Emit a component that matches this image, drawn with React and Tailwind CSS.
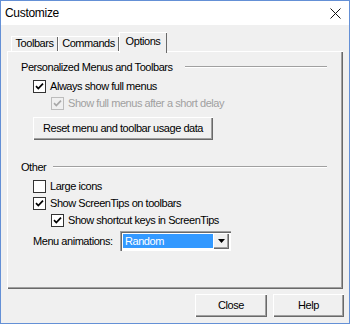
import React from "react";

const raised =
  "shadow-[inset_1px_1px_0_#ffffff,inset_-1px_-1px_0_#696969,inset_-2px_-2px_0_#a0a0a0]";

function Check({ checked, disabled }) {
  return (
    <span
      className={
        "w-[13px] h-[13px] shrink-0 flex items-center justify-center border " +
        (disabled ? "border-[#bcbcbc] bg-[#f0f0f0]" : "border-[#333333] bg-white")
      }
    >
      {checked && (
        <svg width="9" height="9" viewBox="0 0 9 9">
          <path
            d="M1 4.2 L3.3 6.6 L8 1.6"
            fill="none"
            stroke={disabled ? "#a8a8a8" : "#000"}
            strokeWidth="1.7"
          />
        </svg>
      )}
    </span>
  );
}

function CheckRow({ label, checked, disabled, indent }) {
  return (
    <div className={"h-[17px] flex items-center gap-[4px] " + (indent ? "ml-[30px]" : "ml-[12px]")}>
      <Check checked={checked} disabled={disabled} />
      <span className={disabled ? "text-[#a0a0a0]" : "text-black"}>{label}</span>
    </div>
  );
}

function GroupHeader({ title, lineW }) {
  return (
    <div className="h-[14px] flex items-center pr-[16px]">
      <span>{title}</span>
      <div className={"ml-auto h-[2px] border-t border-[#a0a0a0] border-b border-b-white " + lineW} />
    </div>
  );
}

function Tab({ label, w, selected }) {
  return (
    <div
      className={
        "flex items-center justify-center bg-[#f0f0f0] shadow-[inset_1px_1px_0_#ffffff,inset_-1px_0_0_#696969] " +
        w +
        (selected ? " h-[21px] mb-[-2px] relative z-10 pb-[3px]" : " h-[15px]")
      }
    >
      {label}
    </div>
  );
}

function Button({ children, w }) {
  return (
    <button className={"h-[23px] flex items-center justify-center bg-[#f0f0f0] " + raised + " " + w}>
      {children}
    </button>
  );
}

export default function App() {
  return (
    <div className="w-[350px] h-[324px] border border-[#6490d6] flex flex-col bg-[#f0f0f0] text-[11px] leading-[13px] tracking-[-0.45px] text-black font-['Liberation_Sans',Arial,sans-serif] overflow-hidden">
      {/* title bar */}
      <div className="h-[24px] bg-white flex items-center pl-[4px] pr-[8px] shrink-0">
        <span className="text-[12px] tracking-[-0.3px]">Customize</span>
        <svg className="ml-auto" width="11" height="11" viewBox="0 0 11 11">
          <path d="M0.5 0.5 L10.5 10.5 M10.5 0.5 L0.5 10.5" stroke="#111" strokeWidth="1" />
        </svg>
      </div>

      {/* tabs */}
      <div className="mt-[7px] h-[19px] flex items-end pl-[10px]">
        <Tab label="Toolbars" w="w-[47px]" />
        <Tab label="Commands" w="w-[61px]" />
        <Tab label="Options" w="w-[48px]" selected />
      </div>

      {/* panel */}
      <div className={"ml-[6px] w-[336px] h-[238px] pl-[14px] pt-[9px] flex flex-col " + raised}>
        <GroupHeader title="Personalized Menus and Toolbars" lineW="w-[142px]" />
        <div className="mt-[4px]">
          <CheckRow label="Always show full menus" checked />
          <CheckRow label="Show full menus after a short delay" checked disabled indent />
        </div>
        <div className="mt-[5px] ml-[12px]">
          <Button w="w-[180px]">Reset menu and toolbar usage data</Button>
        </div>

        <div className="mt-[20px]">
          <GroupHeader title="Other" lineW="w-[274px]" />
        </div>
        <div className="mt-[4px]">
          <CheckRow label="Large icons" />
          <CheckRow label="Show ScreenTips on toolbars" checked />
          <CheckRow label="Show shortcut keys in ScreenTips" checked indent />
        </div>
        <div className="mt-[2px] ml-[12px] flex items-center">
          <span className="w-[87px]">Menu animations:</span>
          <div className="w-[111px] h-[20px] bg-white flex items-center pl-[2px] pr-[2px] shadow-[inset_1px_1px_0_#a0a0a0,inset_2px_2px_0_#696969,inset_-1px_-1px_0_#ffffff]">
            <div className="flex-1 h-[14px] ml-[1px] bg-[#3399ff] text-white flex items-center pl-[2px]">
              Random
            </div>
            <div className={"w-[16px] h-[16px] bg-[#f0f0f0] flex items-center justify-center " + raised}>
              <svg width="7" height="4" viewBox="0 0 7 4">
                <path d="M0 0 L7 0 L3.5 4 Z" fill="#000" />
              </svg>
            </div>
          </div>
        </div>
      </div>

      {/* bottom buttons */}
      <div className="mt-[5px] flex justify-end gap-[6px] pr-[5px]">
        <Button w="w-[72px]">Close</Button>
        <Button w="w-[71px]">Help</Button>
      </div>
    </div>
  );
}
